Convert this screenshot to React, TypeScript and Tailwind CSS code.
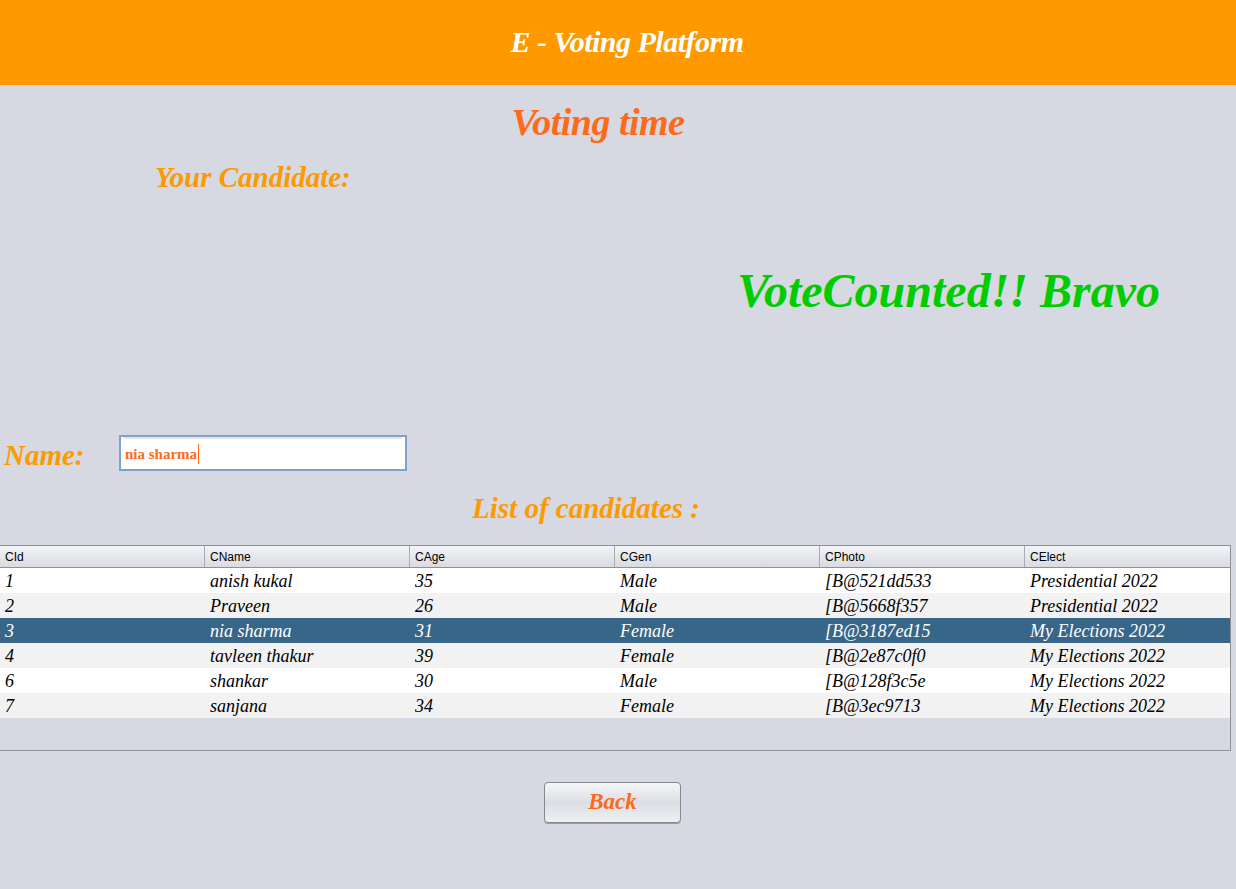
import React from 'react'

type Candidate = {
  id: string
  name: string
  age: string
  gen: string
  photo: string
  elect: string
}

const candidates: Candidate[] = [
  { id: '1', name: 'anish kukal', age: '35', gen: 'Male', photo: '[B@521dd533', elect: 'Presidential 2022' },
  { id: '2', name: 'Praveen', age: '26', gen: 'Male', photo: '[B@5668f357', elect: 'Presidential 2022' },
  { id: '3', name: 'nia sharma', age: '31', gen: 'Female', photo: '[B@3187ed15', elect: 'My Elections 2022' },
  { id: '4', name: 'tavleen thakur', age: '39', gen: 'Female', photo: '[B@2e87c0f0', elect: 'My Elections 2022' },
  { id: '6', name: 'shankar', age: '30', gen: 'Male', photo: '[B@128f3c5e', elect: 'My Elections 2022' },
  { id: '7', name: 'sanjana', age: '34', gen: 'Female', photo: '[B@3ec9713', elect: 'My Elections 2022' },
]

const columns = ['CId', 'CName', 'CAge', 'CGen', 'CPhoto', 'CElect']

export default function App() {
  const selected = '3'

  return (
    <div className="w-[1236px] h-[889px] bg-[#d6d9e1] flex flex-col font-['Liberation_Serif',serif] overflow-hidden">
      {/* Header bar */}
      <div className="h-[85px] bg-[#ff9900] flex items-center justify-center pl-[18px] pb-[3px]">
        <h1 className="text-white text-[30px] font-bold italic tracking-[-0.5px]">E - Voting Platform</h1>
      </div>

      <div className="flex justify-center pt-[16px] pr-[40px]">
        <h2 className="text-[#ff6a1a] text-[38px] leading-[42px] italic font-bold tracking-[-0.5px]">Voting time</h2>
      </div>

      <div className="pl-[155px] mt-[17px]">
        <h3 className="text-[#ff9900] text-[29px] leading-[34px] italic font-bold">Your Candidate:</h3>
      </div>

      <div className="flex justify-end pr-[76px] mt-[67px]">
        <p className="text-[#00cc00] text-[48px] leading-[60px] italic font-bold">VoteCounted!! Bravo</p>
      </div>

      {/* Name field */}
      <div className="flex items-center mt-[114px] h-[36px]">
        <label className="w-[119px] pl-[4px] pt-[5px] text-[#ff9900] text-[29px] italic font-bold">Name:</label>
        <div className="w-[288px] h-[36px] border-2 border-[#7fa3c6] bg-white flex items-center px-[3px]">
          <div className="w-full h-full border-t-2 border-[#e6e6e6] flex items-center pl-[1px]">
            <span className="text-[#ff6a1a] text-[15px] font-bold">nia sharma</span>
            <span className="w-px h-[20px] bg-[#ff6a1a] ml-[1px]" />
          </div>
        </div>
      </div>

      <div className="flex justify-center mt-[20px] pr-[64px]">
        <h3 className="text-[#ff9900] text-[29px] leading-[34px] italic font-bold">List of candidates :</h3>
      </div>

      {/* Table */}
      <div className="mt-[20px] w-[1231px] h-[206px] border border-l-0 border-[#8e9198] flex flex-col">
        <div className="grid grid-cols-6 h-[22px] border-b border-[#8e9198] bg-gradient-to-b from-[#f3f4f7] to-[#d9dbe1]">
          {columns.map((c, i) => (
            <div
              key={c}
              className={`pl-[5px] flex items-center text-[12px] text-black font-['Liberation_Sans',sans-serif] ${i < 5 ? 'border-r border-[#a9acb3]' : ''}`}
            >
              {c}
            </div>
          ))}
        </div>
        {candidates.map((row, idx) => {
          const isSel = row.id === selected
          const bg = isSel ? 'bg-[#386689] text-white' : idx % 2 === 0 ? 'bg-white text-black' : 'bg-[#f2f2f2] text-black'
          return (
            <div key={row.id} className={`grid grid-cols-6 h-[25px] ${bg}`}>
              {[row.id, row.name, row.age, row.gen, row.photo, row.elect].map((v, i) => (
                <div key={i} className="pl-[5px] flex items-center text-[18px] italic">
                  {v}
                </div>
              ))}
            </div>
          )
        })}
      </div>

      {/* Back button */}
      <div className="flex justify-center mt-[31px] pr-[11px]">
        <button className="w-[137px] h-[41px] rounded-[4px] border border-[#85888f] bg-gradient-to-b from-[#f5f6f8] via-[#dcdee4] to-[#eef0f3] text-[#ff6a1a] text-[23px] italic font-bold shadow-[0_1px_0_#9a9da3]">
          Back
        </button>
      </div>
    </div>
  )
}
